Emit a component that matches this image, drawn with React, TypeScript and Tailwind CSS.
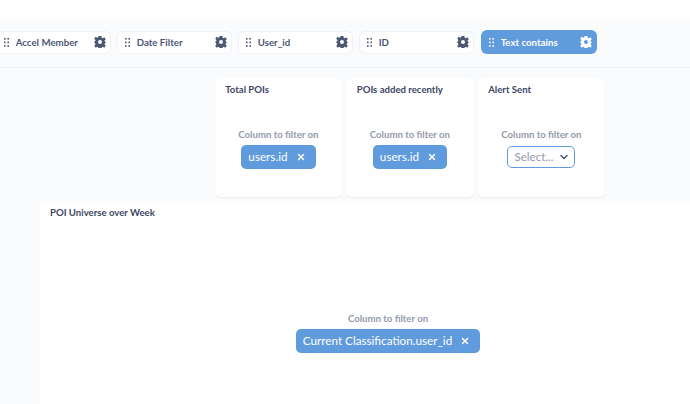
import { X, ChevronDown } from "lucide-react";

const filters = ["Accel Member", "Date Filter", "User_id", "ID", "Text contains"];

function Grip() {
  return (
    <svg width="5" height="9" viewBox="0 0 5 9" className="shrink-0 fill-current">
      <rect x="0" y="0" width="1.6" height="1.6" />
      <rect x="3.4" y="0" width="1.6" height="1.6" />
      <rect x="0" y="3.6" width="1.6" height="1.6" />
      <rect x="3.4" y="3.6" width="1.6" height="1.6" />
      <rect x="0" y="7.2" width="1.6" height="1.6" />
      <rect x="3.4" y="7.2" width="1.6" height="1.6" />
    </svg>
  );
}

function Gear() {
  return (
    <svg width="12" height="12" viewBox="0 0 24 24" className="shrink-0">
      <path
        fill="currentColor"
        fillRule="evenodd"
        d="M9.2 0h5.600l.7 3.600 2 .9 3.100-2 3 4-2.500 2.600.5 2.100 2.400 1.800-2.400 1.800-.5 2.100 2.500 2.600-3 4-3.100-2-2 .9-.7 3.600H9.200l-.7-3.600-2-.9-3.100 2-3-4 2.500-2.600-.5-2.100L0 12l2.400-1.800.5-2.100L.4 5.500l3-4 3.100 2 2-.9zM12 8a4 4 0 1 0 0 8 4 4 0 0 0 0-8z"
      />
    </svg>
  );
}

function FilterChip({ label, active }: { label: string; active?: boolean }) {
  return (
    <div
      className={
        active
          ? "w-[116px] h-[24px] ml-px shrink-0 flex items-center pl-[8px] pr-[5px] rounded-[6px] bg-[#5f9bdd] text-white"
          : "w-[115px] h-[23px] shrink-0 flex items-center pl-[7px] pr-[4px] rounded-[6px] bg-white border border-[#f0f2f5] text-[#4c5773]"
      }
    >
      <Grip />
      <span className="ml-[6.7px] flex-1 text-[9.7px] font-bold truncate">{label}</span>
      <Gear />
    </div>
  );
}

function ColumnTag({ label }: { label: string }) {
  return (
    <div className="h-[24px] pl-[7px] pr-[10px] flex items-center gap-[8px] rounded-[5px] bg-[#5f9bdd] text-white">
      <span className="text-[11.7px] leading-none">{label}</span>
      <X size={10} strokeWidth={3.5} />
    </div>
  );
}

function Caption() {
  return <div className="text-[9.6px] leading-[12px] font-bold text-[#949aab] mb-[4px]">Column to filter on</div>;
}

function Card({ title, children }: { title: string; children: React.ReactNode }) {
  return (
    <div className="w-[127.5px] h-[119px] flex flex-col rounded-[6px] bg-white shadow-[0_1px_2px_rgba(0,0,0,0.06)]">
      <div className="pt-[6px] pl-[10.500px] text-[9.6px] leading-[12px] font-bold text-[#3d4663]">{title}</div>
      <div className="flex-1 flex flex-col items-center pt-[33px]">
        <Caption />
        {children}
      </div>
    </div>
  );
}

export default function App() {
  return (
    <div className="h-[404px] overflow-hidden flex flex-col bg-[#f9fbfc] font-['Lato',sans-serif]">
      <div className="h-[19px] bg-white" />
      <div className="h-[49px] flex items-center gap-[6px] ml-[-4px] pb-[2px] border-b border-[#f0f2f5]">
        {filters.map((f, i) => (
          <FilterChip key={f} label={f} active={i === 4} />
        ))}
      </div>
      <div className="flex gap-[4px] pl-[214.7px] pt-[10px]">
        <Card title="Total POIs">
          <ColumnTag label="users.id" />
        </Card>
        <Card title="POIs added recently">
          <ColumnTag label="users.id" />
        </Card>
        <Card title="Alert Sent">
          <div className="h-[22px] w-[68px] mt-px flex items-center justify-between pl-[6px] pr-[4px] rounded-[5px] bg-white border border-[#5f9bdd] text-[#949aab]">
            <span className="text-[11.6px] leading-none">Select...</span>
            <ChevronDown size={12} strokeWidth={3} className="text-[#4c5773]" />
          </div>
        </Card>
      </div>
      <div className="flex-1 ml-[39px] mt-[4px] rounded-tl-[6px] bg-white shadow-[0_1px_2px_rgba(0,0,0,0.06)] flex flex-col">
        <div className="pt-[6px] pl-[11px] text-[9.6px] leading-[12px] font-bold text-[#3d4663]">POI Universe over Week</div>
        <div className="flex flex-col items-center pt-[94px] pl-[47px]">
          <Caption />
          <ColumnTag label="Current Classification.user_id" />
        </div>
      </div>
    </div>
  );
}
